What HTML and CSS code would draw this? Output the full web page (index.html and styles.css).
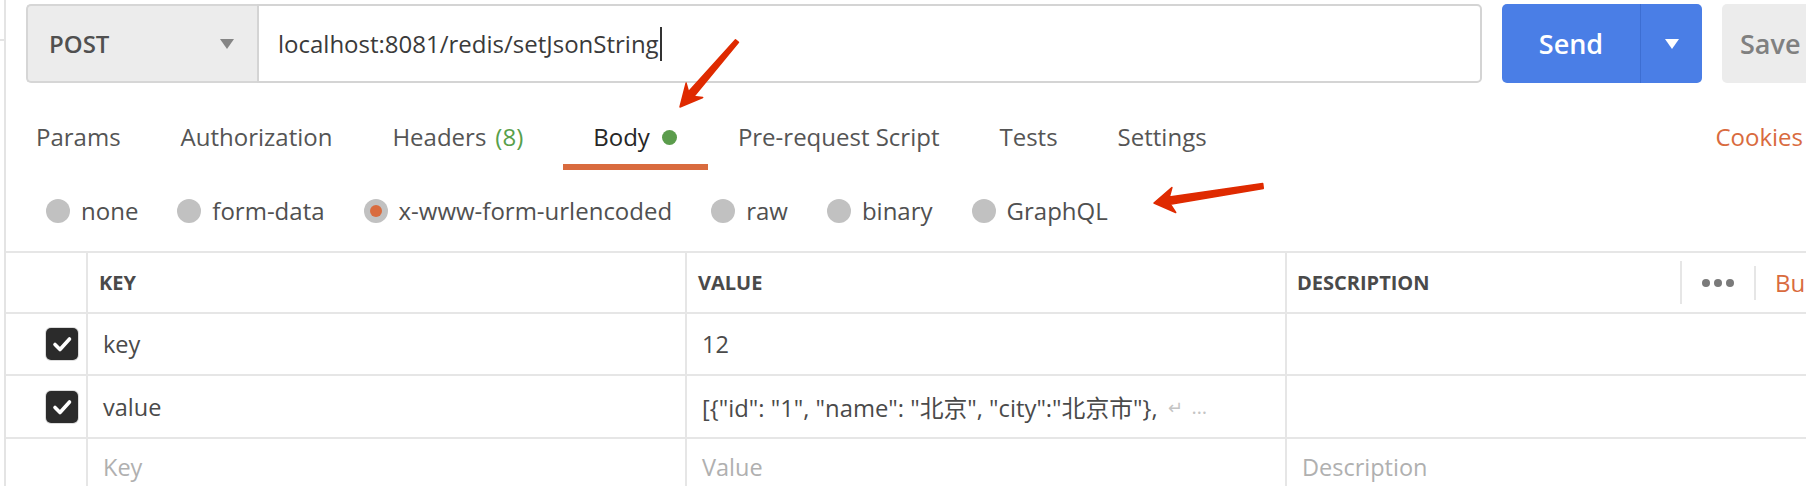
FILE: index.html
```html
<!DOCTYPE html>
<html lang="zh">
<head>
<meta charset="utf-8">
<title>Postman request</title>
<link rel="stylesheet" href="styles.css">
</head>
<body>
<div class="page">
  <div class="edge"></div>
  <div class="main">
    <div class="urlbar">
      <div class="method">
        <span class="method-name">POST</span>
        <span class="caret"></span>
      </div>
      <div class="url"><span>localhost:8081/redis/setJsonString</span><span class="cursor"></span></div>
      <div class="send">
        <span class="send-label">Send</span>
        <span class="send-split"><span class="caret white"></span></span>
      </div>
      <div class="save">Save</div>
    </div>

    <div class="tabs">
      <div class="tab">Params</div>
      <div class="tab">Authorization</div>
      <div class="tab headers">Headers <span class="count">(8)</span></div>
      <div class="tab active">Body <span class="dot"></span></div>
      <div class="tab">Pre-request Script</div>
      <div class="tab">Tests</div>
      <div class="tab">Settings</div>
      <div class="tab-spacer"></div>
      <div class="cookies">Cookies</div>
    </div>

    <div class="radios">
      <div class="radio"><span class="circle"></span>none</div>
      <div class="radio"><span class="circle"></span>form-data</div>
      <div class="radio"><span class="circle on"></span>x-www-form-urlencoded</div>
      <div class="radio"><span class="circle"></span>raw</div>
      <div class="radio"><span class="circle"></span>binary</div>
      <div class="radio"><span class="circle"></span>GraphQL</div>
    </div>

    <div class="table">
      <div class="row head">
        <div class="cell chk"></div>
        <div class="cell">KEY</div>
        <div class="cell">VALUE</div>
        <div class="cell desc-head">
          <span>DESCRIPTION</span>
          <span class="grow"></span>
          <span class="vdiv tall"></span>
          <span class="dots"><i></i><i></i><i></i></span>
          <span class="vdiv short"></span>
          <span class="bulk">Bulk Edit</span>
        </div>
      </div>
      <div class="row r1">
        <div class="cell chk"><span class="checkbox"><svg viewBox="0 0 32 32" width="32" height="32"><path d="M9 16.5 L14 21.5 L23.5 11" fill="none" stroke="#fff" stroke-width="3.6" stroke-linecap="round" stroke-linejoin="round"/></svg></span></div>
        <div class="cell val">key</div>
        <div class="cell val">12</div>
        <div class="cell val"></div>
      </div>
      <div class="row r2">
        <div class="cell chk"><span class="checkbox"><svg viewBox="0 0 32 32" width="32" height="32"><path d="M9 16.5 L14 21.5 L23.5 11" fill="none" stroke="#fff" stroke-width="3.6" stroke-linecap="round" stroke-linejoin="round"/></svg></span></div>
        <div class="cell val">value</div>
        <div class="cell val json">[{"id": "1", "name": "北京", "city":"北京市"},<span class="more"><span class="ret">↵</span><span class="ell">…</span></span></div>
        <div class="cell val"></div>
      </div>
      <div class="row r3">
        <div class="cell chk"></div>
        <div class="cell val ph">Key</div>
        <div class="cell val ph">Value</div>
        <div class="cell val ph">Description</div>
      </div>
    </div>
  </div>

  <svg class="annot" width="1806" height="486" viewBox="0 0 1806 486">
    <polygon points="738.5,42.3 693.8,96.4 702.7,97.5 680,107 686.1,83.1 688.5,91.8 735.5,39.7" fill="#df2a00" stroke="#df2a00" stroke-width="1.5" stroke-linejoin="round"/>
    <polygon points="1263.3,188.4 1170.3,204.2 1175.7,212.5 1154,203 1171.9,187.5 1169.3,197.0 1262.7,183.6" fill="#df2a00" stroke="#df2a00" stroke-width="1.5" stroke-linejoin="round"/>
  </svg>
</div>
</body>
</html>
```

FILE: styles.css
```css
* { box-sizing: border-box; }
html, body { margin: 0; padding: 0; background: #fff; }
body {
  font-family: "Open Sans", "Noto Sans CJK SC", sans-serif;
  color: #505050;
  width: 1806px;
  height: 486px;
  overflow: hidden;
}
.page {
  position: relative;
  display: flex;
  width: 1806px;
  height: 486px;
}
.edge {
  width: 4px;
  height: 41px;
  border-bottom: 2px solid #e4e4e4;
  flex: none;
}
.main {
  flex: 1;
  min-width: 0;
  border-left: 2px solid #e4e4e4;
  display: flex;
  flex-direction: column;
  overflow: hidden;
}

/* URL bar */
.urlbar {
  display: flex;
  padding: 4px 0 0 20px;
  height: 83px;
  flex: none;
  overflow: hidden;
}
.method {
  flex: none;
  width: 231px;
  height: 79px;
  background: #ececec;
  border: 2px solid #d6d6d6;
  border-right: none;
  border-radius: 5px 0 0 5px;
  display: flex;
  align-items: center;
  padding: 0 23px 0 21px;
}
.method-name {
  font-weight: 600;
  font-size: 24px;
  color: #505050;
  flex: 1;
}
.caret {
  width: 0;
  height: 0;
  border-left: 7.5px solid transparent;
  border-right: 7.5px solid transparent;
  border-top: 10px solid #858585;
}
.caret.white { border-top-color: #fff; }
.url {
  flex: none;
  width: 1225px;
  height: 79px;
  border: 2px solid #d4d4d4;
  border-radius: 0 5px 5px 0;
  display: flex;
  align-items: center;
  padding-left: 19px;
  font-size: 24px;
  color: #3a3a3a;
}
.cursor {
  width: 2px;
  height: 34px;
  background: #333;
  margin-left: 1px;
}
.send {
  margin-left: 20px;
  width: 200px;
  height: 79px;
  background: #4a7ee6;
  border-radius: 5px;
  display: flex;
  color: #fff;
  flex: none;
}
.send-label {
  width: 139px;
  display: flex;
  align-items: center;
  justify-content: center;
  font-weight: 600;
  font-size: 27px;
  border-right: 1px solid #3d6ed2;
}
.send-split {
  flex: 1;
  display: flex;
  align-items: center;
  justify-content: center;
}
.save {
  margin-left: 20px;
  flex: none;
  width: 120px;
  height: 79px;
  background: #ececec;
  border-radius: 5px;
  display: flex;
  align-items: center;
  padding-left: 18px;
  font-weight: 600;
  font-size: 27px;
  color: #808080;
}

/* Tabs */
.tabs {
  display: flex;
  height: 87px;
  flex: none;
}
.tab {
  height: 87px;
  padding: 37px 30px 0;
  font-size: 24px;
  line-height: 34px;
  color: #555;
  white-space: nowrap;
  display: flex;
  align-items: flex-start;
}
.tab.headers { padding-right: 40px; }
.tab .count { color: #58a04a; margin-left: 9px; }
.tab.active {
  color: #262626;
  padding-right: 31px;
  border-bottom: 6px solid #d96b3e;
}
.dot {
  width: 15px;
  height: 15px;
  border-radius: 50%;
  background: #5b9c4c;
  margin: 10px 0 0 12px;
}
.tab-spacer { flex: 1; }
.cookies {
  font-size: 24px;
  line-height: 34px;
  padding-top: 37px;
  padding-right: 3px;
  color: #d96b3e;
}

/* Radios */
.radios {
  display: flex;
  align-items: center;
  height: 81px;
  flex: none;
  padding-left: 40px;
}
.radio {
  display: flex;
  align-items: center;
  font-size: 24px;
  color: #505050;
  margin-right: 39px;
  white-space: nowrap;
}
.circle {
  width: 24px;
  height: 24px;
  border-radius: 50%;
  background: #c1c1c1;
  margin-right: 11px;
  display: flex;
  align-items: center;
  justify-content: center;
}
.circle.on::after {
  content: "";
  width: 12px;
  height: 12px;
  border-radius: 50%;
  background: #d96b3e;
}

/* Table */
.table {
  display: flex;
  flex-direction: column;
  flex: 1;
}
.row {
  display: grid;
  grid-template-columns: 82px 599px 600px 1fr;
  border-top: 2px solid #e6e6e6;
}
.row.head { height: 61px; }
.row.r1 { height: 62px; }
.row.r2 { height: 63px; }
.row.r3 { flex: 1; }
.cell {
  border-right: 2px solid #e6e6e6;
  display: flex;
  align-items: center;
  padding-left: 11px;
  white-space: nowrap;
  overflow: hidden;
}
.cell:last-child { border-right: none; }
.head .cell {
  font-weight: 700;
  font-size: 20px;
  color: #4a4a4a;
}
.cell.chk {
  justify-content: flex-end;
  padding: 0 8px 0 0;
}
.checkbox {
  width: 32px;
  height: 32px;
  background: #2b2b2b;
  border-radius: 5px;
  box-shadow: 0 0 0 1px #dcdcdc;
  display: block;
}
.checkbox svg { display: block; }
.cell.val {
  padding-left: 15px;
  font-size: 23.5px;
  color: #4a4a4a;
}
.cell.json { font-size: 23.8px; }
.row.r3 .cell { align-items: flex-start; padding-top: 12px; }
.cell.ph { color: #b0b0b0; }
.more { color: #c4c4c4; font-size: 18px; display: inline-flex; align-items: center; }
.ret { margin-left: 10px; }
.ell { margin-left: 9px; font-size: 20px; }

.desc-head { padding-left: 10px; }
.grow { flex: 1; }
.vdiv { width: 2px; background: #e6e6e6; flex: none; }
.vdiv.tall { height: 43px; }
.vdiv.short { height: 34px; }
.dots {
  display: flex;
  gap: 4px;
  margin: 0 20px;
}
.dots i {
  width: 8px;
  height: 8px;
  border-radius: 50%;
  background: #7a7a7a;
  display: block;
}
.bulk {
  font-weight: 400;
  font-size: 24px;
  color: #d96b3e;
  margin-left: 19px;
  width: 31px;
  overflow: hidden;
  flex: none;
}

.annot {
  position: absolute;
  left: 0;
  top: 0;
  pointer-events: none;
}
```
